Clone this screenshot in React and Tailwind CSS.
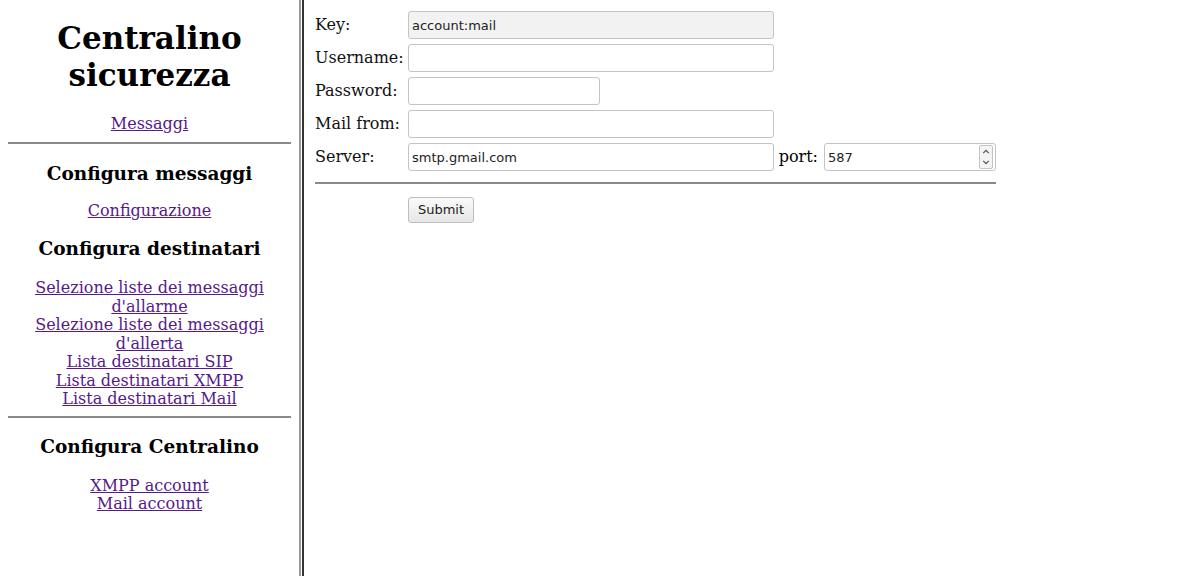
const serif = { fontFamily: '"DejaVu Serif", serif' }

const Link = ({ children }) => (
  <a href="#" className="text-[#551a8b] underline">
    {children}
  </a>
)

const Field = ({ label, children }) => (
  <div className="flex items-center h-[28px]">
    <span className="w-[93px] shrink-0 text-[16px] text-[#111]">{label}</span>
    {children}
  </div>
)

const inputCls =
  "h-[28px] rounded-[3px] border border-[#c4c4c4] px-[3px] text-[13px] text-[#222] font-['DejaVu_Sans',sans-serif] outline-none"

export default function App() {
  return (
    <div className="flex h-[576px] w-[1200px] bg-white text-black" style={serif}>
      <aside className="w-[299px] shrink-0 flex flex-col items-center text-center px-[8px]">
        <h1 className="mt-[20px] text-[31px] font-bold leading-[37px]">
          Centralino
          <br />
          sicurezza
        </h1>
        <div className="mt-[21px] text-[16px] leading-[18.5px]">
          <Link>Messaggi</Link>
        </div>
        <hr className="mt-[8px] w-full border-t-2 border-[#8a8a8a]" />
        <h2 className="mt-[19px] text-[18.5px] font-bold leading-[22px]">Configura messaggi</h2>
        <div className="mt-[17px] text-[16px] leading-[18.5px]">
          <Link>Configurazione</Link>
        </div>
        <h2 className="mt-[18px] text-[18.5px] font-bold leading-[22px]">Configura destinatari</h2>
        <div className="mt-[19px] flex flex-col text-[16px] leading-[18.5px]">
          <Link>Selezione liste dei messaggi d'allarme</Link>
          <Link>Selezione liste dei messaggi d'allerta</Link>
          <Link>Lista destinatari SIP</Link>
          <Link>Lista destinatari XMPP</Link>
          <Link>Lista destinatari Mail</Link>
        </div>
        <hr className="mt-[7px] w-full border-t-2 border-[#8a8a8a]" />
        <h2 className="mt-[18px] text-[18.5px] font-bold leading-[22px]">Configura Centralino</h2>
        <div className="mt-[19px] flex flex-col text-[16px] leading-[18.5px]">
          <Link>XMPP account</Link>
          <Link>Mail account</Link>
        </div>
      </aside>

      <div className="w-[5px] shrink-0 border-l-2 border-r-2 border-l-[#9a9a9a] border-r-[#333]" />

      <main className="pl-[11px] pt-[11px]">
        <form className="flex flex-col gap-[5px] w-[681px]">
          <Field label="Key:">
            <input readOnly value="account:mail" className={inputCls + ' w-[366px] bg-[#f2f2f2]'} />
          </Field>
          <Field label="Username:">
            <input className={inputCls + ' w-[366px] bg-white'} />
          </Field>
          <Field label="Password:">
            <input type="password" className={inputCls + ' w-[192px] bg-white'} />
          </Field>
          <Field label="Mail from:">
            <input className={inputCls + ' w-[366px] bg-white'} />
          </Field>
          <Field label="Server:">
            <input readOnly value="smtp.gmail.com" className={inputCls + ' w-[366px] bg-white'} />
            <span className="ml-[5px] mr-[6px] text-[16px]">port:</span>
            <div className="relative">
              <input readOnly value="587" className={inputCls + ' w-[172px] bg-white'} />
              <div className="absolute right-[3px] top-[2px] flex h-[24px] w-[14px] flex-col rounded-[2px] border border-[#c4c4c4] bg-[#f4f4f4] text-[#555]">
                <svg viewBox="0 0 10 10" className="h-[11px] w-full">
                  <path d="M2.5 6.5 L5 4 L7.5 6.5" fill="none" stroke="currentColor" strokeWidth="1.2" />
                </svg>
                <svg viewBox="0 0 10 10" className="h-[11px] w-full">
                  <path d="M2.5 3.5 L5 6 L7.5 3.5" fill="none" stroke="currentColor" strokeWidth="1.2" />
                </svg>
              </div>
            </div>
          </Field>
          <hr className="mt-[6px] w-full border-t-2 border-[#8a8a8a]" />
          <div className="mt-[8px] pl-[93px]">
            <button
              type="button"
              className="h-[26px] w-[66px] rounded-[3px] border border-[#bdbdbd] bg-gradient-to-b from-[#fafafa] to-[#e6e6e6] text-[13px] text-[#222] font-['DejaVu_Sans',sans-serif]"
            >
              Submit
            </button>
          </div>
        </form>
      </main>
    </div>
  )
}
